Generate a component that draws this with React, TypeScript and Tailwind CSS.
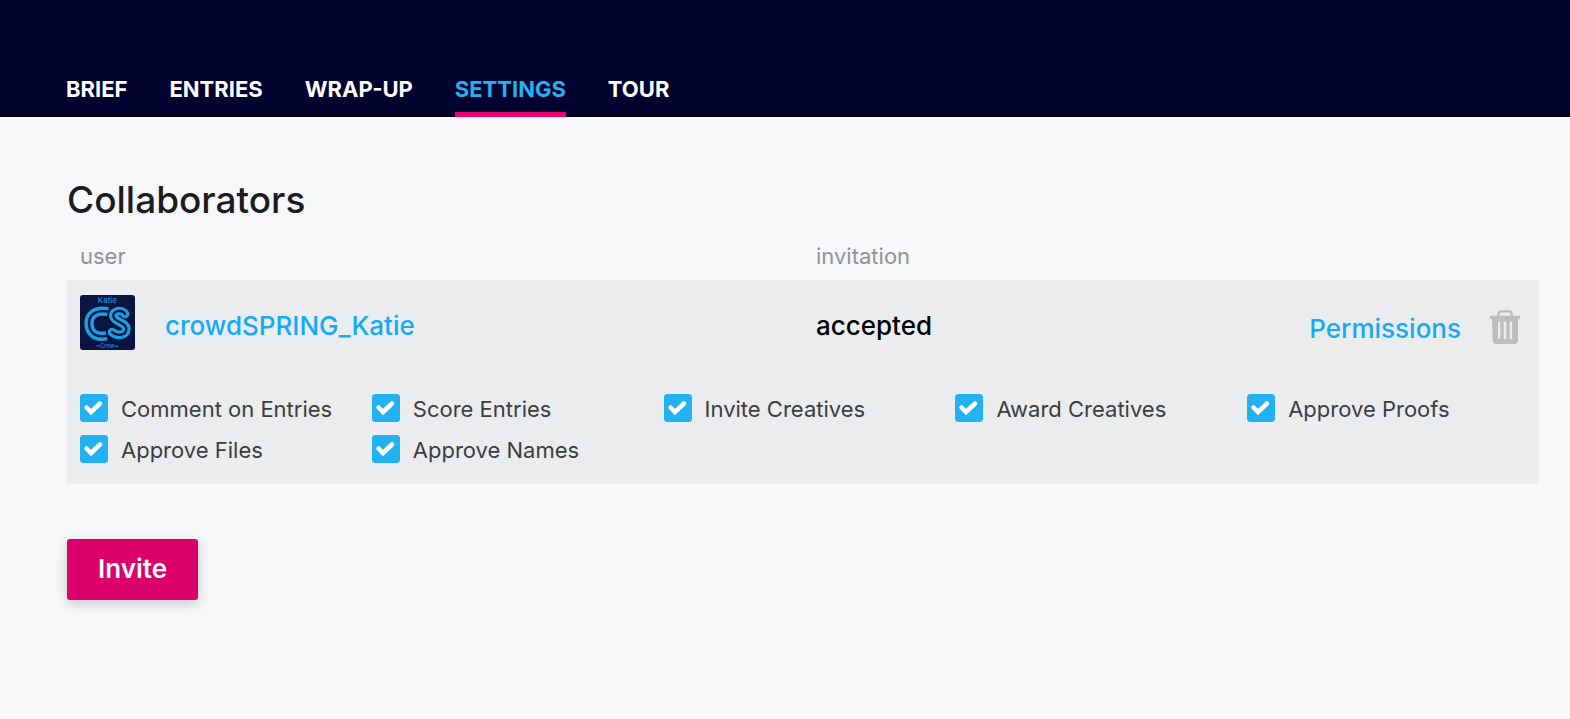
import { useState } from "react";

const abas = ["BRIEF", "ENTRIES", "WRAP-UP", "SETTINGS", "TOUR"];

const permissions = [
  "Comment on Entries",
  "Score Entries",
  "Invite Creatives",
  "Award Creatives",
  "Approve Proofs",
  "Approve Files",
  "Approve Names",
];

function Avatar() {
  return (
    <svg
      viewBox="0 0 165 165"
      className="size-[55px] shrink-0 rounded-[3px] bg-[#0b1440]"
      role="img"
      aria-label="crowdSPRING_Katie"
    >
      <g fill="none" strokeLinejoin="round">
        <path
          d="M84 50C44 42 26 62 27 87C28 112 46 130 80 122"
          stroke="#1d9ee0"
          strokeWidth="28"
        />
        <path
          d="M86 50C44 42 26 62 27 87C28 112 46 130 82 122"
          stroke="#0b1440"
          strokeWidth="7"
        />
        <g strokeLinecap="round">
          <path
            d="M135 57C128 43 97 46 100 64C103 82 139 82 139 101C139 122 112 125 96 111"
            stroke="#0b1440"
            strokeWidth="34"
          />
          <path
            d="M135 57C128 43 97 46 100 64C103 82 139 82 139 101C139 122 112 125 96 111"
            stroke="#1d9ee0"
            strokeWidth="26"
          />
          <path
            d="M135 57C128 43 97 46 100 64C103 82 139 82 139 101C139 122 112 125 96 111"
            stroke="#0b1440"
            strokeWidth="7"
          />
        </g>
      </g>
      <g fill="#1d9ee0" fontFamily="Inter, sans-serif" textAnchor="middle">
        <text x="82" y="23" fontSize="24">
          Katie
        </text>
        <text x="82" y="159" fontSize="18">
          ~Crew~
        </text>
      </g>
    </svg>
  );
}

function TrashIcon() {
  return (
    <svg viewBox="0 0 90 102" className="h-[34px] w-[30px]" aria-hidden="true">
      <path
        d="M25 20V13Q25 4 34 4H56Q65 4 65 13V20"
        fill="none"
        stroke="#bcbdbe"
        strokeWidth="7"
      />
      <path
        fill="#bcbdbe"
        fillRule="evenodd"
        d="M2 17H88Q90 17 90 19V25Q90 27 88 27H84V90Q84 102 72 102H20Q8 102 8 90L6 27H2Q0 27 0 25V19Q0 17 2 17ZM24 35V87H31V35ZM41 35V87H49V35ZM59 35V87H66V35Z"
      />
    </svg>
  );
}

function Permission({ label }: { label: string }) {
  return (
    <label className="flex items-start gap-[13px] text-[22px] leading-[30px] text-[#3b3d40]">
      <span className="relative size-7 shrink-0">
        <input
          type="checkbox"
          defaultChecked
          className="peer block size-7 appearance-none rounded-[3px] border border-[#22b2f2] bg-white checked:bg-[#22b2f2]"
        />
        <svg
          viewBox="0 0 28 28"
          className="pointer-events-none absolute inset-0 hidden size-7 peer-checked:block"
          aria-hidden="true"
        >
          <path
            d="M6.5 13.5L11 18L20 9.5"
            fill="none"
            stroke="#fff"
            strokeWidth="4.5"
            strokeLinecap="round"
          />
        </svg>
      </span>
      <span className="-mb-[2px]">{label}</span>
    </label>
  );
}

export default function App() {
  const [open, setOpen] = useState(true);

  return (
    <div className="min-h-screen bg-[#f6f7f9] font-['Inter',sans-serif] text-[#1c1c1e]">
      <header className="border-b border-black bg-[#01022d] pt-[72px] pl-[66px]">
        <nav className="-mb-px flex gap-[42px] text-[22px] leading-[34px] font-bold text-white">
          {abas.map((aba) => (
            <a
              key={aba}
              href="#"
              className={
                aba === "SETTINGS"
                  ? "border-b-[5px] border-[#e8066c] pb-[6px] text-[#22b2f2]"
                  : "pb-[11px]"
              }
            >
              {aba}
            </a>
          ))}
        </nav>
      </header>

      <main className="pt-[57px] pr-[31px] pl-[67px]">
        <h1 className="text-[37px] leading-[52px] font-medium">Collaborators</h1>

        <table className="mt-[10px] w-full table-fixed text-left">
          <thead className="text-[22px] leading-10 text-[#929396]">
            <tr>
              <th className="w-1/2 pb-1 pl-[13px] font-normal">user</th>
              <th className="w-1/4 pb-1 pl-[13px] font-normal">invitation</th>
              <th className="w-1/4" aria-label="actions" />
            </tr>
          </thead>
          <tbody className="bg-[#ebeced] text-[26px] leading-8">
            <tr>
              <td className="pt-[15px] pl-[13px]">
                <div className="flex items-center gap-[30px]">
                  <Avatar />
                  <a href="#" className="pt-[6px] font-medium text-[#14aaf5]">
                    crowdSPRING_Katie
                  </a>
                </div>
              </td>
              <td className="pt-[21px] pl-[13px] font-medium text-black">
                accepted
              </td>
              <td className="pt-[15px] pr-[19px]">
                <div className="flex items-center justify-end gap-[29px] pt-2">
                  <button
                    onClick={() => setOpen(!open)}
                    className="pt-1 font-medium text-[#14aaf5]"
                  >
                    Permissions
                  </button>
                  <button aria-label="Remove collaborator">
                    <TrashIcon />
                  </button>
                </div>
              </td>
            </tr>
            {open && (
              <tr>
                <td colSpan={3} className="pt-11 pb-[21px] pl-[13px]">
                  <div className="grid grid-cols-5 gap-y-[13px]">
                    {permissions.map((label) => (
                      <Permission key={label} label={label} />
                    ))}
                  </div>
                </td>
              </tr>
            )}
          </tbody>
        </table>

        <button className="mt-[55px] rounded-[3px] bg-[#dc006a] px-[31px] pt-[13px] pb-[15px] text-[26px] leading-[33px] font-semibold text-white shadow-[0_4px_12px_rgba(0,0,0,0.18)]">
          Invite
        </button>
      </main>
    </div>
  );
}
